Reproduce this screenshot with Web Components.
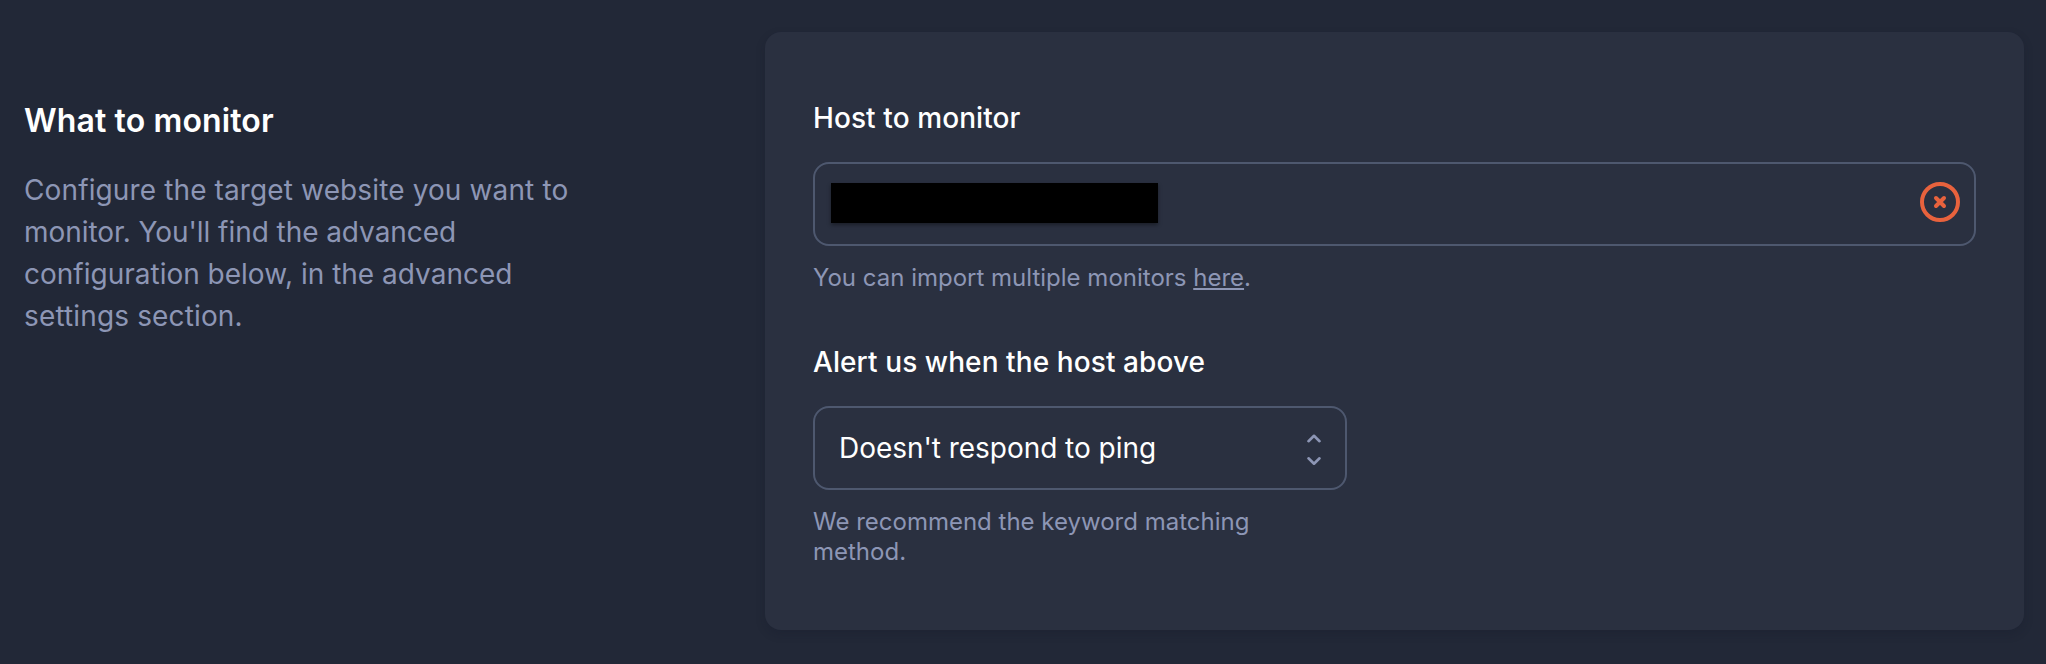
<!DOCTYPE html>
<html lang="en">
<head>
<meta charset="utf-8">
<title>Monitor settings</title>
<style>
html{background:#222837}
body{margin:0;height:664px;overflow:hidden;font-family:Inter,"Liberation Sans",sans-serif;color:#fff;background:#222837}
section-intro span{display:block;white-space:nowrap}
</style>
</head>
<body>
<settings-section>
  <section-intro slot="intro" heading="What to monitor"><span style="letter-spacing:.125px">Configure the target website you want to</span> <span style="letter-spacing:-.06px">monitor. You'll find the advanced</span> <span>configuration below, in the advanced</span> <span style="letter-spacing:.14px">settings section.</span></section-intro>
  <form-field label="Host to monitor"><host-input></host-input><span slot="hint">You can import multiple monitors <u>here</u>.</span></form-field>
  <form-field label="Alert us when the host above" narrow><select-box>Doesn't respond to ping</select-box><span slot="hint">We recommend the keyword matching method.</span></form-field>
</settings-section>
<script>
function define(name, html) {
  const t = document.createElement('template');
  t.innerHTML = html;
  customElements.define(name, class extends HTMLElement {
    constructor() {
      super();
      this.attachShadow({mode: 'open'}).append(t.content.cloneNode(true));
    }
    connectedCallback() {
      for (const el of this.shadowRoot.querySelectorAll('[data-attr]'))
        el.textContent = this.getAttribute(el.dataset.attr);
    }
  });
}
define('settings-section', `<style>
:host{display:grid;grid-template-columns:741px 1259px;padding:32px 22px 34px 24px;box-sizing:border-box;height:664px}
.card{box-sizing:border-box;height:598px;padding:65px 48px 0;border-radius:16px;background:#2a3040;box-shadow:0 4px 10px rgba(20,22,40,.22);display:flex;flex-direction:column;gap:48px}
</style><slot name="intro"></slot><div class="card"><slot></slot></div>`);
define('section-intro', `<style>
:host{display:block;padding-top:69px;width:560px}
h2{margin:0;font-size:32px;line-height:40px;font-weight:600;white-space:nowrap;letter-spacing:.12px}
.text{margin:28px 0 0;font-size:28px;line-height:42px;color:#8d96b5}
</style><h2 data-attr="heading"></h2><div class="text"><slot></slot></div>`);
define('form-field', `<style>
:host{display:block}
:host([narrow]){width:534px}
label{display:block;font-size:28px;line-height:42px;font-weight:500;letter-spacing:.09px;margin-bottom:23px}
.hint{margin-top:17px;font-size:24px;line-height:30px;color:#8d96b5}
::slotted(span){display:block}
:host([narrow]) .hint{max-width:460px}
</style><label data-attr="label"></label><slot></slot><div class="hint"><slot name="hint"></slot></div>`);
define('host-input', `<style>
:host{display:flex;align-items:center;justify-content:space-between;box-sizing:border-box;height:84px;border:2px solid #4e586f;border-radius:16px;padding:0 14px 4px 16px}
.value{width:327px;height:40px;margin-top:2px;background:#000;box-shadow:0 2px 4px rgba(0,0,0,.4)}
svg{display:block}
</style><div class="value"></div><svg width="40" height="40" viewBox="0 0 40 40" fill="none" stroke="#e8623d" stroke-width="4"><circle cx="20" cy="20" r="18"/><path d="M16 16l8 8M24 16l-8 8" stroke-linecap="round"/></svg>`);
define('select-box', `<style>
:host{display:flex;align-items:center;justify-content:space-between;box-sizing:border-box;height:84px;border:2px solid #4e586f;border-radius:16px;padding:0 23px 0 24px;font-size:28px;line-height:40px;letter-spacing:-.04px}
svg{display:block;margin-top:4px}
</style><span><slot></slot></span><svg width="16" height="32" viewBox="0 0 16 32" fill="none" stroke="#8d96b5" stroke-width="2.6" stroke-linecap="round" stroke-linejoin="round"><path d="M2.5 7.2l5.5-5.4 5.5 5.4M2.5 24.3l5.5 5.4 5.5-5.4"/></svg>`);
</script>
</body>
</html>
